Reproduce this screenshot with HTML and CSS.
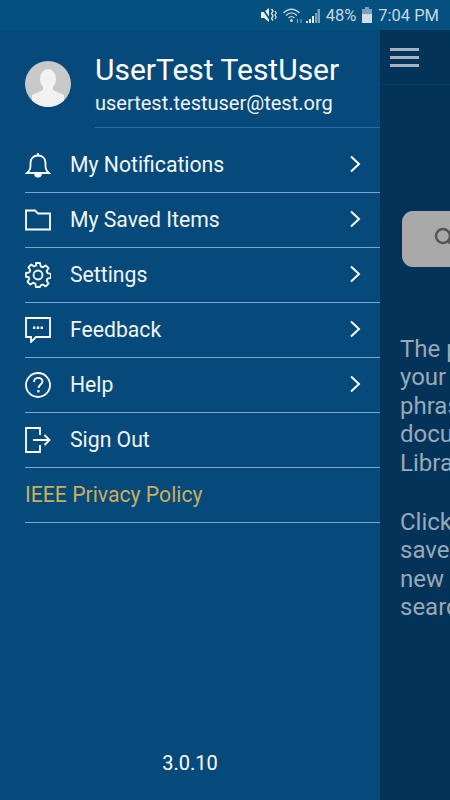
FILE: index.html
```html
<!DOCTYPE html>
<html lang="en">
<head>
<meta charset="UTF-8">
<title>Menu</title>
<link rel="stylesheet" href="styles.css">
</head>
<body>

<div class="status">
  <svg class="st-mute" width="16" height="16" viewBox="0 0 16 16">
    <path d="M0 5h3l5-4v14l-5-4H0z" fill="#e6edf3"/>
    <path d="M1 1l9 13" stroke="#04507f" stroke-width="1.600"/>
    <path d="M10.500 2l1.500 2-1.500 2.500 1.500 2.500-1.500 2.500 1.500 2" fill="none" stroke="#e6edf3" stroke-width="1.300"/>
    <path d="M14 4l1.200 2-1.200 2 1.200 2-1.200 2" fill="none" stroke="#e6edf3" stroke-width="1.100"/>
  </svg>
  <svg class="st-wifi" width="21" height="15" viewBox="0 0 21 15">
    <path d="M.5 5c5-5 11-5 16 0M3 7.500c3.500-3.300 7.500-3.300 11 0M5.500 10c2-1.800 4-1.800 6 0" fill="none" stroke="#c4d4e0" stroke-width="1.300"/>
    <circle cx="8.500" cy="12.500" r="1.500" fill="#c4d4e0"/>
    <path d="M14.500 15v-4M18 11v4" stroke="#7fa0ba" stroke-width="1.200"/>
  </svg>
  <svg class="st-signal" width="14" height="15" viewBox="0 0 14 15">
    <path d="M0 15v-2h2v2zM3 15v-4h2v4zM6 15V8h2v7z" fill="#dfe8ef"/>
    <path d="M9 15V5h2v10zM11.500 15V1H14v14z" fill="#7fa0ba"/>
  </svg>
  <span class="st-text">48%</span>
  <svg class="st-batt" width="10" height="16" viewBox="0 0 10 16">
    <path d="M3 0h4v2h3v14H0V2h3z" fill="#7fa0ba"/>
    <path d="M0 7h10v9H0z" fill="#cfdde8"/>
  </svg>
  <span class="st-text">7:04 PM</span>
</div>

<div class="main">
  <div class="drawer">
    <div class="profile">
      <svg class="avatar" width="46" height="46" viewBox="0 0 46 46">
        <defs><clipPath id="round"><circle cx="23" cy="23" r="23"/></clipPath></defs>
        <circle cx="23" cy="23" r="23" fill="#c9c9c9"/>
        <g clip-path="url(#round)" fill="#f2f2f2">
          <ellipse cx="23" cy="18" rx="8" ry="10"/>
          <path d="M18 25h10v4l11 5v12H7V34l11-5z"/>
        </g>
      </svg>
      <div class="who">
        <div class="name">UserTest TestUser</div>
        <div class="mail">usertest.testuser@test.org</div>
      </div>
    </div>

    <div class="menu">
      <div class="item">
        <svg class="ico" width="26" height="26" viewBox="0 0 26 26">
          <path d="M2 21c2.500-2 3.500-3.500 3.500-7v-3c0-4.500 3-7.500 7.500-7.500s7.500 3 7.500 7.500v3c0 3.500 1 5 3.500 7z"/>
          <path d="M10 21.500c0 4 6 4 6 0" fill="#fff"/>
          <path d="M13 1v2.500"/>
        </svg>
        <span class="label">My Notifications</span>
        <svg class="chev" width="12" height="18" viewBox="0 0 12 18"><path d="M2 1.500L10 9l-8 7.500"/></svg>
      </div>
      <div class="item">
        <svg class="ico" width="26" height="26" viewBox="0 0 26 26">
          <path d="M1 3.500h9l3 3h12v16H1z"/>
        </svg>
        <span class="label">My Saved Items</span>
        <svg class="chev" width="12" height="18" viewBox="0 0 12 18"><path d="M2 1.500L10 9l-8 7.500"/></svg>
      </div>
      <div class="item">
        <svg class="ico" width="26" height="26" viewBox="0 0 26 26">
          <circle cx="13" cy="13" r="4.500"/>
          <path d="M11 1h4l.7 3.400 2 .9 3-1.900 2.800 2.800-1.900 3 .9 2 3.400.7v4l-3.400.7-.9 2 1.900 3-2.800 2.800-3-1.900-2 .9L15 25h-4l-.7-3.400-2-.9-3 1.900-2.800-2.800 1.900-3-.9-2L1 15v-4l3.400-.7.9-2-1.900-3 2.800-2.800 3 1.900 2-.9z" stroke-linejoin="round"/>
        </svg>
        <span class="label">Settings</span>
        <svg class="chev" width="12" height="18" viewBox="0 0 12 18"><path d="M2 1.500L10 9l-8 7.500"/></svg>
      </div>
      <div class="item">
        <svg class="ico" width="26" height="26" viewBox="0 0 26 26">
          <path d="M1 1h24v19H11l-5 5v-5H1z"/>
          <path class="dots" d="M8 9.500h2.400v2.400H8zM11.800 9.500h2.400v2.400h-2.400zM15.600 9.500H18v2.400h-2.400z"/>
        </svg>
        <span class="label">Feedback</span>
        <svg class="chev" width="12" height="18" viewBox="0 0 12 18"><path d="M2 1.500L10 9l-8 7.500"/></svg>
      </div>
      <div class="item">
        <svg class="ico" width="26" height="26" viewBox="0 0 26 26">
          <circle cx="13" cy="13" r="12"/>
          <path d="M9 10c0-5.500 8.500-5.500 8.500-.500 0 3-4 3-4 6.500"/>
          <path class="dots" d="M12.300 18h2.200v2.400h-2.200z"/>
        </svg>
        <span class="label">Help</span>
        <svg class="chev" width="12" height="18" viewBox="0 0 12 18"><path d="M2 1.500L10 9l-8 7.500"/></svg>
      </div>
      <div class="item">
        <svg class="ico" width="26" height="26" viewBox="0 0 26 26">
          <path d="M15 8V1H1v24h14v-7"/>
          <path d="M8 13h16M19.500 8l5 5-5 5"/>
        </svg>
        <span class="label">Sign Out</span>
      </div>
      <div class="item link">
        <span class="label">IEEE Privacy Policy</span>
      </div>
    </div>

    <div class="version">3.0.10</div>
  </div>

  <div class="behind">
    <div class="topbar">
      <div class="burger"><i></i><i></i><i></i></div>
    </div>
    <div class="searchbox">
      <svg width="24" height="24" viewBox="0 0 24 24"><circle cx="10" cy="10" r="7"/><path d="M15 15l7 7"/></svg>
    </div>
    <div class="hint">
      <p>The page lets you enter<br>your search terms or a<br>phrase to look through<br>documents in the IEEE<br>Library.</p>
      <p>Click the icon to<br>save this search as a<br>new item in your saved<br>searches.</p>
    </div>
  </div>
</div>

</body>
</html>
```

FILE: styles.css
```css
* {
  box-sizing: border-box;
}

html, body {
  height: 100%;
}

body {
  margin: 0;
  width: 450px;
  height: 800px;
  overflow: hidden;
  font-family: Roboto, "Liberation Sans", sans-serif;
  background: #04507f;
  display: flex;
  flex-direction: column;
}

/* status bar */
.status {
  height: 30px;
  flex: none;
  display: flex;
  align-items: center;
  justify-content: flex-end;
  padding-right: 11px;
  background: #04507f;
  color: #c9d8e4;
  font-size: 16.500px;
}
.st-mute { margin-right: 6px; }
.st-wifi { margin-right: 2px; }
.st-signal { margin-right: 6px; }
.st-batt { margin: 0 6px 0 6px; }

.main {
  flex: 1;
  display: flex;
  min-height: 0;
}

/* left menu */
.drawer {
  width: 380px;
  flex: none;
  display: flex;
  flex-direction: column;
  background: #054a7a;
  color: #fff;
}

.profile {
  height: 98px;
  flex: none;
  display: flex;
  padding-left: 25px;
}
.avatar {
  flex: none;
  margin-top: 31px;
}
.who {
  flex: 1;
  margin-left: 24px;
  border-bottom: 1px solid #2a6cab;
}
.name {
  margin-top: 22px;
  font-size: 30px;
  line-height: 36px;
}
.mail {
  margin-top: 3px;
  font-size: 20px;
  line-height: 24px;
  color: #f0f4f8;
}

.menu {
  padding-top: 10px;
}
.item {
  height: 55px;
  margin-left: 25px;
  display: flex;
  align-items: center;
  border-bottom: 1px solid #7aa6cc;
}
.ico {
  flex: none;
  fill: none;
  stroke: #fff;
  stroke-width: 1.800;
}
.ico .dots {
  fill: #fff;
  stroke: none;
}
.label {
  flex: 1;
  margin-left: 19px;
  padding-bottom: 2px;
  font-size: 21.200px;
  color: #f2f5f8;
}
.chev {
  flex: none;
  margin: 0 19px 2px 0;
  fill: none;
  stroke: #fff;
  stroke-width: 2;
}
.link .label {
  margin-left: 0;
  color: #c9ae5e;
}

.version {
  margin-top: auto;
  padding-bottom: 26px;
  text-align: center;
  font-size: 20px;
  line-height: 22px;
}

/* page behind the menu */
.behind {
  flex: 1;
  min-width: 0;
  overflow: hidden;
  background: #04335a;
}
.topbar {
  height: 55px;
  border-bottom: 1px solid #053c66;
  padding: 18px 0 0 10px;
}
.burger {
  width: 29px;
}
.burger i {
  display: block;
  height: 3px;
  margin-bottom: 5px;
  background: #a6b3bf;
}
.searchbox {
  width: 200px;
  height: 56px;
  margin: 126px 0 0 22px;
  padding: 15px 0 0 31px;
  background: #a9a9a9;
  border-radius: 11px;
}
.searchbox svg {
  fill: none;
  stroke: #555;
  stroke-width: 2.500;
}
.hint {
  margin: 68px 0 0 20px;
  width: 300px;
  color: #98a9b7;
  font-size: 24px;
  line-height: 28.400px;
  white-space: nowrap;
}
.hint p {
  margin: 0 0 31px;
}
```
